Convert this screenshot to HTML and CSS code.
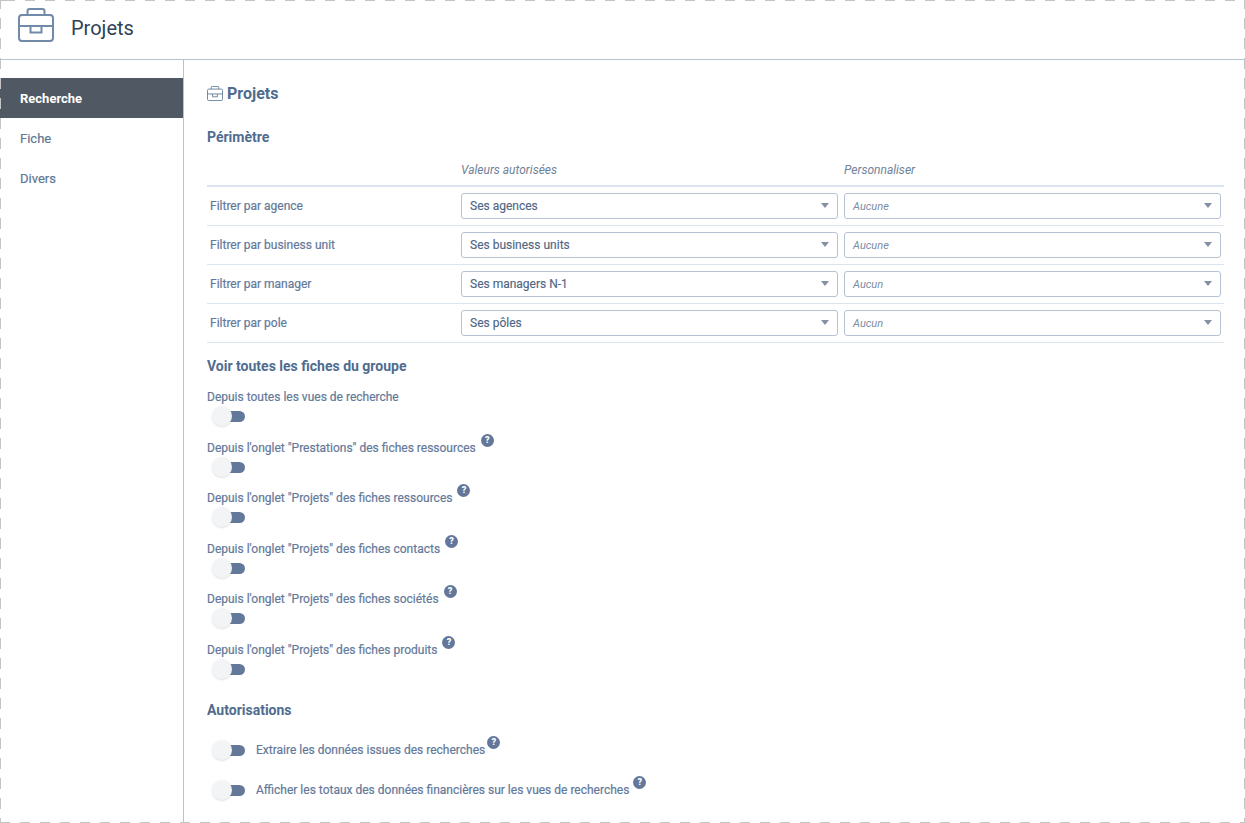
FILE: index.html
```html
<!DOCTYPE html>
<html lang="fr">
<head>
<meta charset="utf-8">
<title>Projets</title>
<link rel="stylesheet" href="styles.css">
</head>
<body>
<svg class="defs" width="0" height="0" aria-hidden="true">
  <symbol id="case" viewBox="0 0 36 34">
    <path d="M9.5 7V3a2 2 0 0 1 2-2h13a2 2 0 0 1 2 2v4" fill="none" stroke="currentColor" stroke-width="2"/>
    <rect x="1" y="7" width="34" height="26" rx="3" fill="none" stroke="currentColor" stroke-width="2"/>
    <path d="M1 18h11.500M23.500 18H35" fill="none" stroke="currentColor" stroke-width="2"/>
    <path d="M12.500 18h11v6.500h-11z" fill="none" stroke="currentColor" stroke-width="2"/>
  </symbol>
</svg>
<div class="frame">
  <header class="topbar">
    <svg class="topicon"><use href="#case"/></svg>
    <h1 class="apptitle">Projets</h1>
  </header>
  <div class="body-row">
    <nav class="sidebar">
      <a class="navitem active">Recherche</a>
      <a class="navitem">Fiche</a>
      <a class="navitem">Divers</a>
    </nav>
    <main class="content">
      <h2 class="pagetitle"><svg class="smallicon"><use href="#case"/></svg>Projets</h2>
      <h3 class="section first">Périmètre</h3>
      <div class="grid head">
        <span></span><em>Valeurs autorisées</em><em>Personnaliser</em>
      </div>
      <div class="grid row">
        <span class="rowlabel">Filtrer par agence</span>
        <div class="select">Ses agences</div>
        <div class="select custom">Aucune</div>
      </div>
      <div class="grid row">
        <span class="rowlabel">Filtrer par business unit</span>
        <div class="select">Ses business units</div>
        <div class="select custom">Aucune</div>
      </div>
      <div class="grid row">
        <span class="rowlabel">Filtrer par manager</span>
        <div class="select">Ses managers N-1</div>
        <div class="select custom">Aucun</div>
      </div>
      <div class="grid row">
        <span class="rowlabel">Filtrer par pole</span>
        <div class="select">Ses pôles</div>
        <div class="select custom">Aucun</div>
      </div>
      <h3 class="section second">Voir toutes les fiches du groupe</h3>
      <div class="stack">
        <div class="field"><div class="fieldlabel">Depuis toutes les vues de recherche</div><span class="toggle"></span></div>
        <div class="field"><div class="fieldlabel">Depuis l'onglet "Prestations" des fiches ressources<span class="help">?</span></div><span class="toggle"></span></div>
        <div class="field"><div class="fieldlabel">Depuis l'onglet "Projets" des fiches ressources<span class="help">?</span></div><span class="toggle"></span></div>
        <div class="field"><div class="fieldlabel">Depuis l'onglet "Projets" des fiches contacts<span class="help">?</span></div><span class="toggle"></span></div>
        <div class="field"><div class="fieldlabel">Depuis l'onglet "Projets" des fiches sociétés<span class="help">?</span></div><span class="toggle"></span></div>
        <div class="field"><div class="fieldlabel">Depuis l'onglet "Projets" des fiches produits<span class="help">?</span></div><span class="toggle"></span></div>
      </div>
      <h3 class="section third">Autorisations</h3>
      <div class="inline"><span class="toggle"></span><span class="fieldlabel">Extraire les données issues des recherches<span class="help tight">?</span></span></div>
      <div class="inline"><span class="toggle"></span><span class="fieldlabel">Afficher les totaux des données financières sur les vues de recherches<span class="help wide">?</span></span></div>
    </main>
  </div>
  <div class="dash dash-top"></div>
  <div class="dash dash-bottom"></div>
  <div class="dash dash-left"></div>
  <div class="dash dash-right"></div>
</div>
</body>
</html>
```
FILE: styles.css
```css
* { box-sizing: border-box; }
html, body { margin: 0; padding: 0; }
body { width: 1245px; height: 823px; overflow: hidden; background: #fff; font-family: Roboto, "Liberation Sans", sans-serif; font-size: 12px; color: #6a7f9a; }
.defs { position: absolute; }
.frame { position: relative; width: 1245px; height: 823px; }
.dash { position: absolute; }
.dash-top { left: 0; right: 0; top: 0; height: 1px; background: repeating-linear-gradient(90deg, #c4c4c4 0 10px, transparent 10px 20px) 5px 0; }
.dash-bottom { left: 0; right: 0; bottom: 0; height: 1px; background: repeating-linear-gradient(90deg, #c4c4c4 0 10px, transparent 10px 20px); }
.dash-left { left: 0; top: 0; bottom: 0; width: 1px; background: repeating-linear-gradient(180deg, #c4c4c4 0 11px, transparent 11px 20px) 0 -2px; }
.dash-right { right: 0; top: 0; bottom: 0; width: 1px; background: repeating-linear-gradient(180deg, #c4c4c4 0 11px, transparent 11px 20px) 0 -2px; }

.topbar { height: 60px; display: flex; align-items: center; padding-left: 18px; border-bottom: 1px solid #b8c3d0; }
.topicon { width: 36px; height: 34px; margin-top: -10px; color: #708aa8; }
.apptitle { margin: 0 0 3px 17px; font-size: 20px; font-weight: 400; color: #2f4258; }

.body-row { display: flex; height: 763px; }
.sidebar { width: 184px; flex: none; padding-top: 18px; border-right: 1px solid #b8c3d0; }
.navitem { display: block; height: 40px; line-height: 41px; padding-left: 20px; font-size: 13px; color: #5f7896; -webkit-text-stroke: 0.2px #5f7896; }
.navitem.active { background: #4f5863; color: #fff; font-weight: 700; -webkit-text-stroke: 0; }

.content { flex: 1; padding: 0 21px 0 23px; }
.pagetitle { display: flex; align-items: center; margin: 23px 0 0; height: 20px; font-size: 16px; font-weight: 700; color: #4f6c8f; }
.smallicon { width: 16px; height: 15px; margin-right: 4px; color: #5f7b9b; }
.section { margin: 0; font-size: 14px; line-height: 18px; font-weight: 700; color: #4f6c8f; }
.section.first { margin-top: 25px; }
.section.second { margin-top: 14px; }
.section.third { margin-top: 10px; }

.grid { display: grid; grid-template-columns: 248px 377px 377px; column-gap: 6px; padding-right: 3px; align-items: center; }
.head { height: 41px; border-bottom: 2px solid #dbe4ef; padding-top: 9px; }
.head em { font-size: 12px; font-style: italic; color: #708299; }
.row { height: 39px; border-bottom: 1px solid #dbe4ef; padding-bottom: 1px; }
.rowlabel { padding-left: 3px; color: #64799a; -webkit-text-stroke: 0.2px #64799a; }
.select { position: relative; height: 26px; line-height: 24px; padding-left: 8px; border: 1px solid #b4c2d3; border-radius: 3px; color: #4f6785; -webkit-text-stroke: 0.15px #4f6785; }
.select::after { content: ""; position: absolute; right: 8px; top: 9px; border-left: 4px solid transparent; border-right: 4px solid transparent; border-top: 5px solid #8291a5; }
.select.custom { font-size: 11px; line-height: 25px; font-style: italic; color: #7c8ca2; -webkit-text-stroke: 0; }

.stack { margin-top: 13px; }
.field { height: 50.500px; }
.fieldlabel { line-height: 18px; color: #64799a; -webkit-text-stroke: 0.2px #64799a; }
.field .fieldlabel { height: 18px; }
.toggle { display: block; position: relative; width: 23px; height: 11px; margin: 5px 0 0 15px; background: #64799a; border-radius: 0 6px 6px 0; flex: none; }
.toggle::before { content: ""; position: absolute; left: -10px; top: -5px; width: 20px; height: 20px; border-radius: 50%; background: #f3f4f6; box-shadow: 0 1px 2px rgba(120, 130, 145, 0.25); }
.help { display: inline-block; position: relative; top: -5px; width: 13px; height: 13px; margin-left: 5px; border-radius: 50%; background: #62779a; color: #fff; font-size: 9px; font-weight: 900; line-height: 13px; text-align: center; vertical-align: top; -webkit-text-stroke: 0; }
.help.tight { margin-left: 2px; }
.help.wide { margin-left: 4px; }

.inline { display: flex; align-items: center; height: 40px; }
.inline .toggle { margin: 0 11px 0 15px; }
.section.third + .inline { margin-top: 11px; }
```
